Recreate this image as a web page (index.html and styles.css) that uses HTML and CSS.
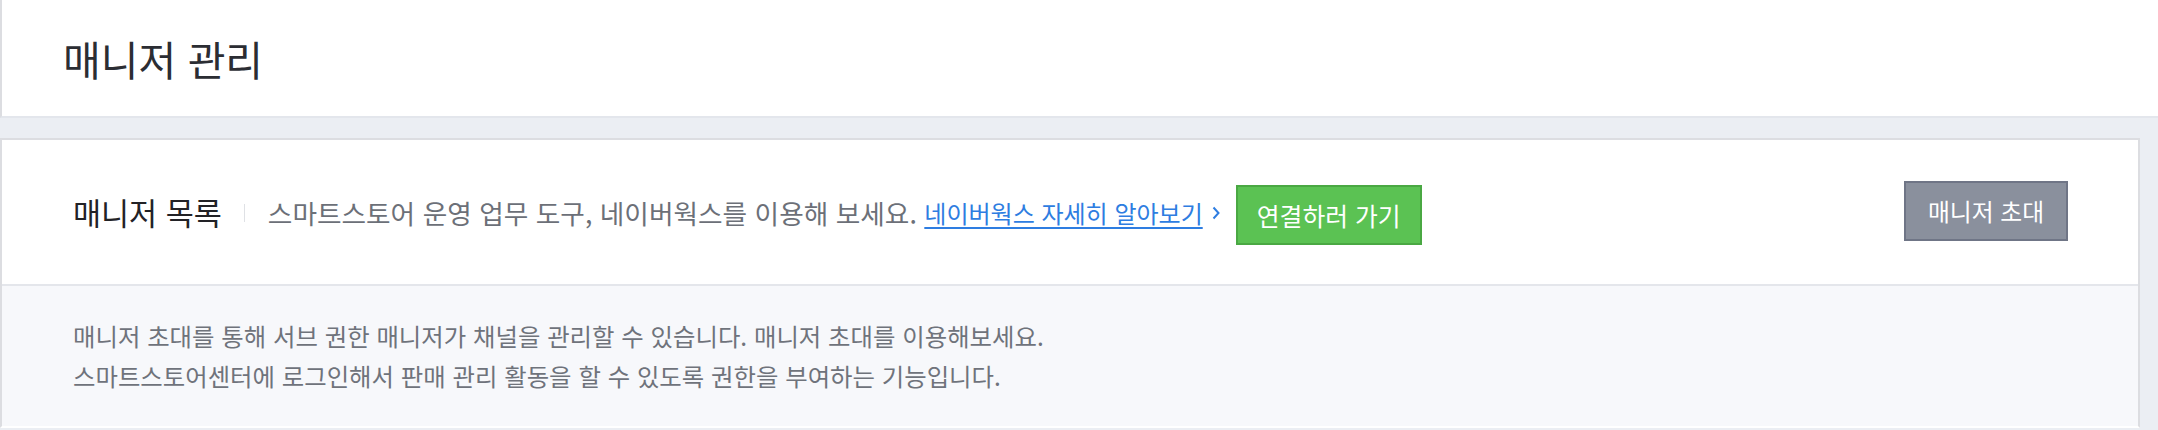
FILE: index.html
```html
<!DOCTYPE html>
<html lang="ko">
<head>
<meta charset="utf-8">
<title>매니저 관리</title>
<link rel="stylesheet" href="styles.css">
</head>
<body>
<div class="page">
  <header class="page-header">
    <h1 class="page-title">매니저 관리</h1>
  </header>
  <section class="card">
    <div class="card-head">
      <h2 class="card-title">매니저 목록</h2>
      <span class="divider"></span>
      <p class="card-desc">스마트스토어 운영 업무 도구, 네이버웍스를 이용해 보세요. <a class="link" href="#">네이버웍스 자세히 알아보기</a><svg class="chev" width="8" height="14" viewBox="0 0 8 14"><polyline points="1.5,1.5 6.5,7 1.5,12.5" fill="none" stroke="#2e7de1" stroke-width="2"/></svg></p>
      <a class="btn btn-green" href="#">연결하러 가기</a>
      <button class="btn btn-gray" type="button">매니저 초대</button>
    </div>
    <div class="card-body">
      <p class="info">매니저 초대를 통해 서브 권한 매니저가 채널을 관리할 수 있습니다. 매니저 초대를 이용해보세요.<br>스마트스토어센터에 로그인해서 판매 관리 활동을 할 수 있도록 권한을 부여하는 기능입니다.</p>
    </div>
  </section>
</div>
</body>
</html>
```
FILE: styles.css
```css
* { box-sizing: border-box; }
html, body { margin: 0; padding: 0; }
body {
  background: #ebeef3;
  font-family: "Noto Sans CJK KR", "Noto Sans", sans-serif;
  color: #303038;
}
.page-header {
  height: 118px;
  background: #fff;
  border-left: 2px solid #dcdde1;
  border-bottom: 2px solid #e3e6ec;
  display: flex;
  align-items: center;
  padding-left: 61px;
}
.page-title {
  margin: 0;
  font-size: 41px;
  font-weight: 400;
  color: #2b2d33;
  line-height: 1;
}
.card {
  margin: 20px 18px 0 0;
  border: 2px solid #dcdde1;
  border-bottom-color: #ffffff;
  background: #fff;
}
.card-head {
  height: 146px;
  border-bottom: 2px solid #e4e6eb;
  display: flex;
  align-items: center;
  padding: 0 70px 0 71px;
}
.card-title {
  margin: 0;
  font-size: 30.5px;
  font-weight: 400;
  color: #222226;
  line-height: 1;
}
.divider {
  width: 1px;
  height: 18px;
  background: #dfe1e5;
  margin: 2px 23px 0 22px;
}
.card-desc {
  margin: 0;
  font-size: 26.7px;
  color: #6c7078;
  display: flex;
  align-items: center;
  white-space: pre;
}
.link {
  color: #2e7de1;
  font-size: 24px;
  text-decoration: underline;
  text-underline-offset: 4px;
}
.chev {
  margin-left: 9px;
  margin-top: 2px;
}
.btn {
  display: inline-flex;
  align-items: center;
  justify-content: center;
  height: 60px;
  font-family: inherit;
  color: #fff;
  text-decoration: none;
  border: 2px solid;
  padding: 0;
  line-height: 1;
  cursor: pointer;
}
.btn-green {
  width: 186px;
  font-size: 24.8px;
  background: #5bc253;
  border-color: #4aa843;
  margin-left: 16px;
  margin-top: 6px;
}
.btn-gray {
  width: 164px;
  font-size: 23.8px;
  background: #8a909d;
  border-color: #6f7586;
  margin-left: auto;
  margin-top: -2px;
}
.card-body {
  background: #f7f8fb;
  padding: 30px 71px 30px 71px;
}
.info {
  margin: 0;
  font-size: 24.4px;
  line-height: 40px;
  color: #6f737b;
}
```
